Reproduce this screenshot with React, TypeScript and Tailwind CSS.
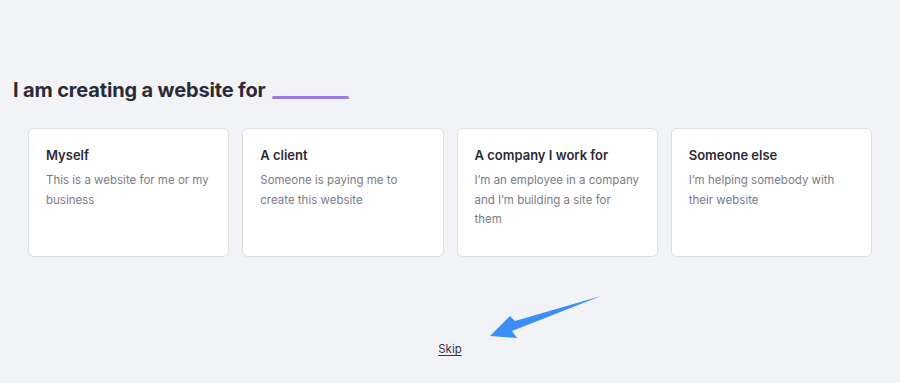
import React from "react";

const cards = [
  { title: "Myself", desc: "This is a website for me or my business" },
  { title: "A client", desc: "Someone is paying me to create this website" },
  { title: "A company I work for", desc: "I’m an employee in a company and I’m building a site for them" },
  { title: "Someone else", desc: "I’m helping somebody with their website" },
];

export default function App() {
  return (
    <div
      className="relative w-[900px] h-[383px] bg-[#f2f3f7] overflow-hidden"
      style={{ fontFamily: "Inter, 'Open Sans', sans-serif" }}
    >
      <div className="pt-[76px] pl-[13px] flex items-end gap-[6px]">
        <h1 className="text-[20px] leading-[28px] font-bold text-[#2b2a35] tracking-[-0.15px]">
          I am creating a website for
        </h1>
        <div className="w-[77px] h-[3px] bg-[#9b7be6] mb-[5px] rounded-full" />
      </div>
      <div className="mt-[24px] ml-[28px] w-[844px] grid grid-cols-4 gap-[13px]">
        {cards.map((c) => (
          <div
            key={c.title}
            className="h-[129px] bg-white border border-[#dedfe5] rounded-[6px] px-[17px] pt-[17px]"
          >
            <div className="text-[13px] leading-[18px] font-semibold text-[#2b2a35]">{c.title}</div>
            <div className="mt-[7px] text-[11.5px] leading-[19.5px] text-[#7c7b85]">{c.desc}</div>
          </div>
        ))}
      </div>
      <div className="mt-[84px] flex justify-center">
        <span className="text-[11.5px] text-[#36344d] underline underline-offset-2">Skip</span>
      </div>
      <svg
        className="absolute left-[480px] top-[290px]"
        width="130"
        height="55"
        viewBox="480 290 130 55"
      >
        <polygon
          points="601,296 515,321 510,316 490,336 517,338 512,331"
          fill="#3b8ef6"
        />
      </svg>
    </div>
  );
}
